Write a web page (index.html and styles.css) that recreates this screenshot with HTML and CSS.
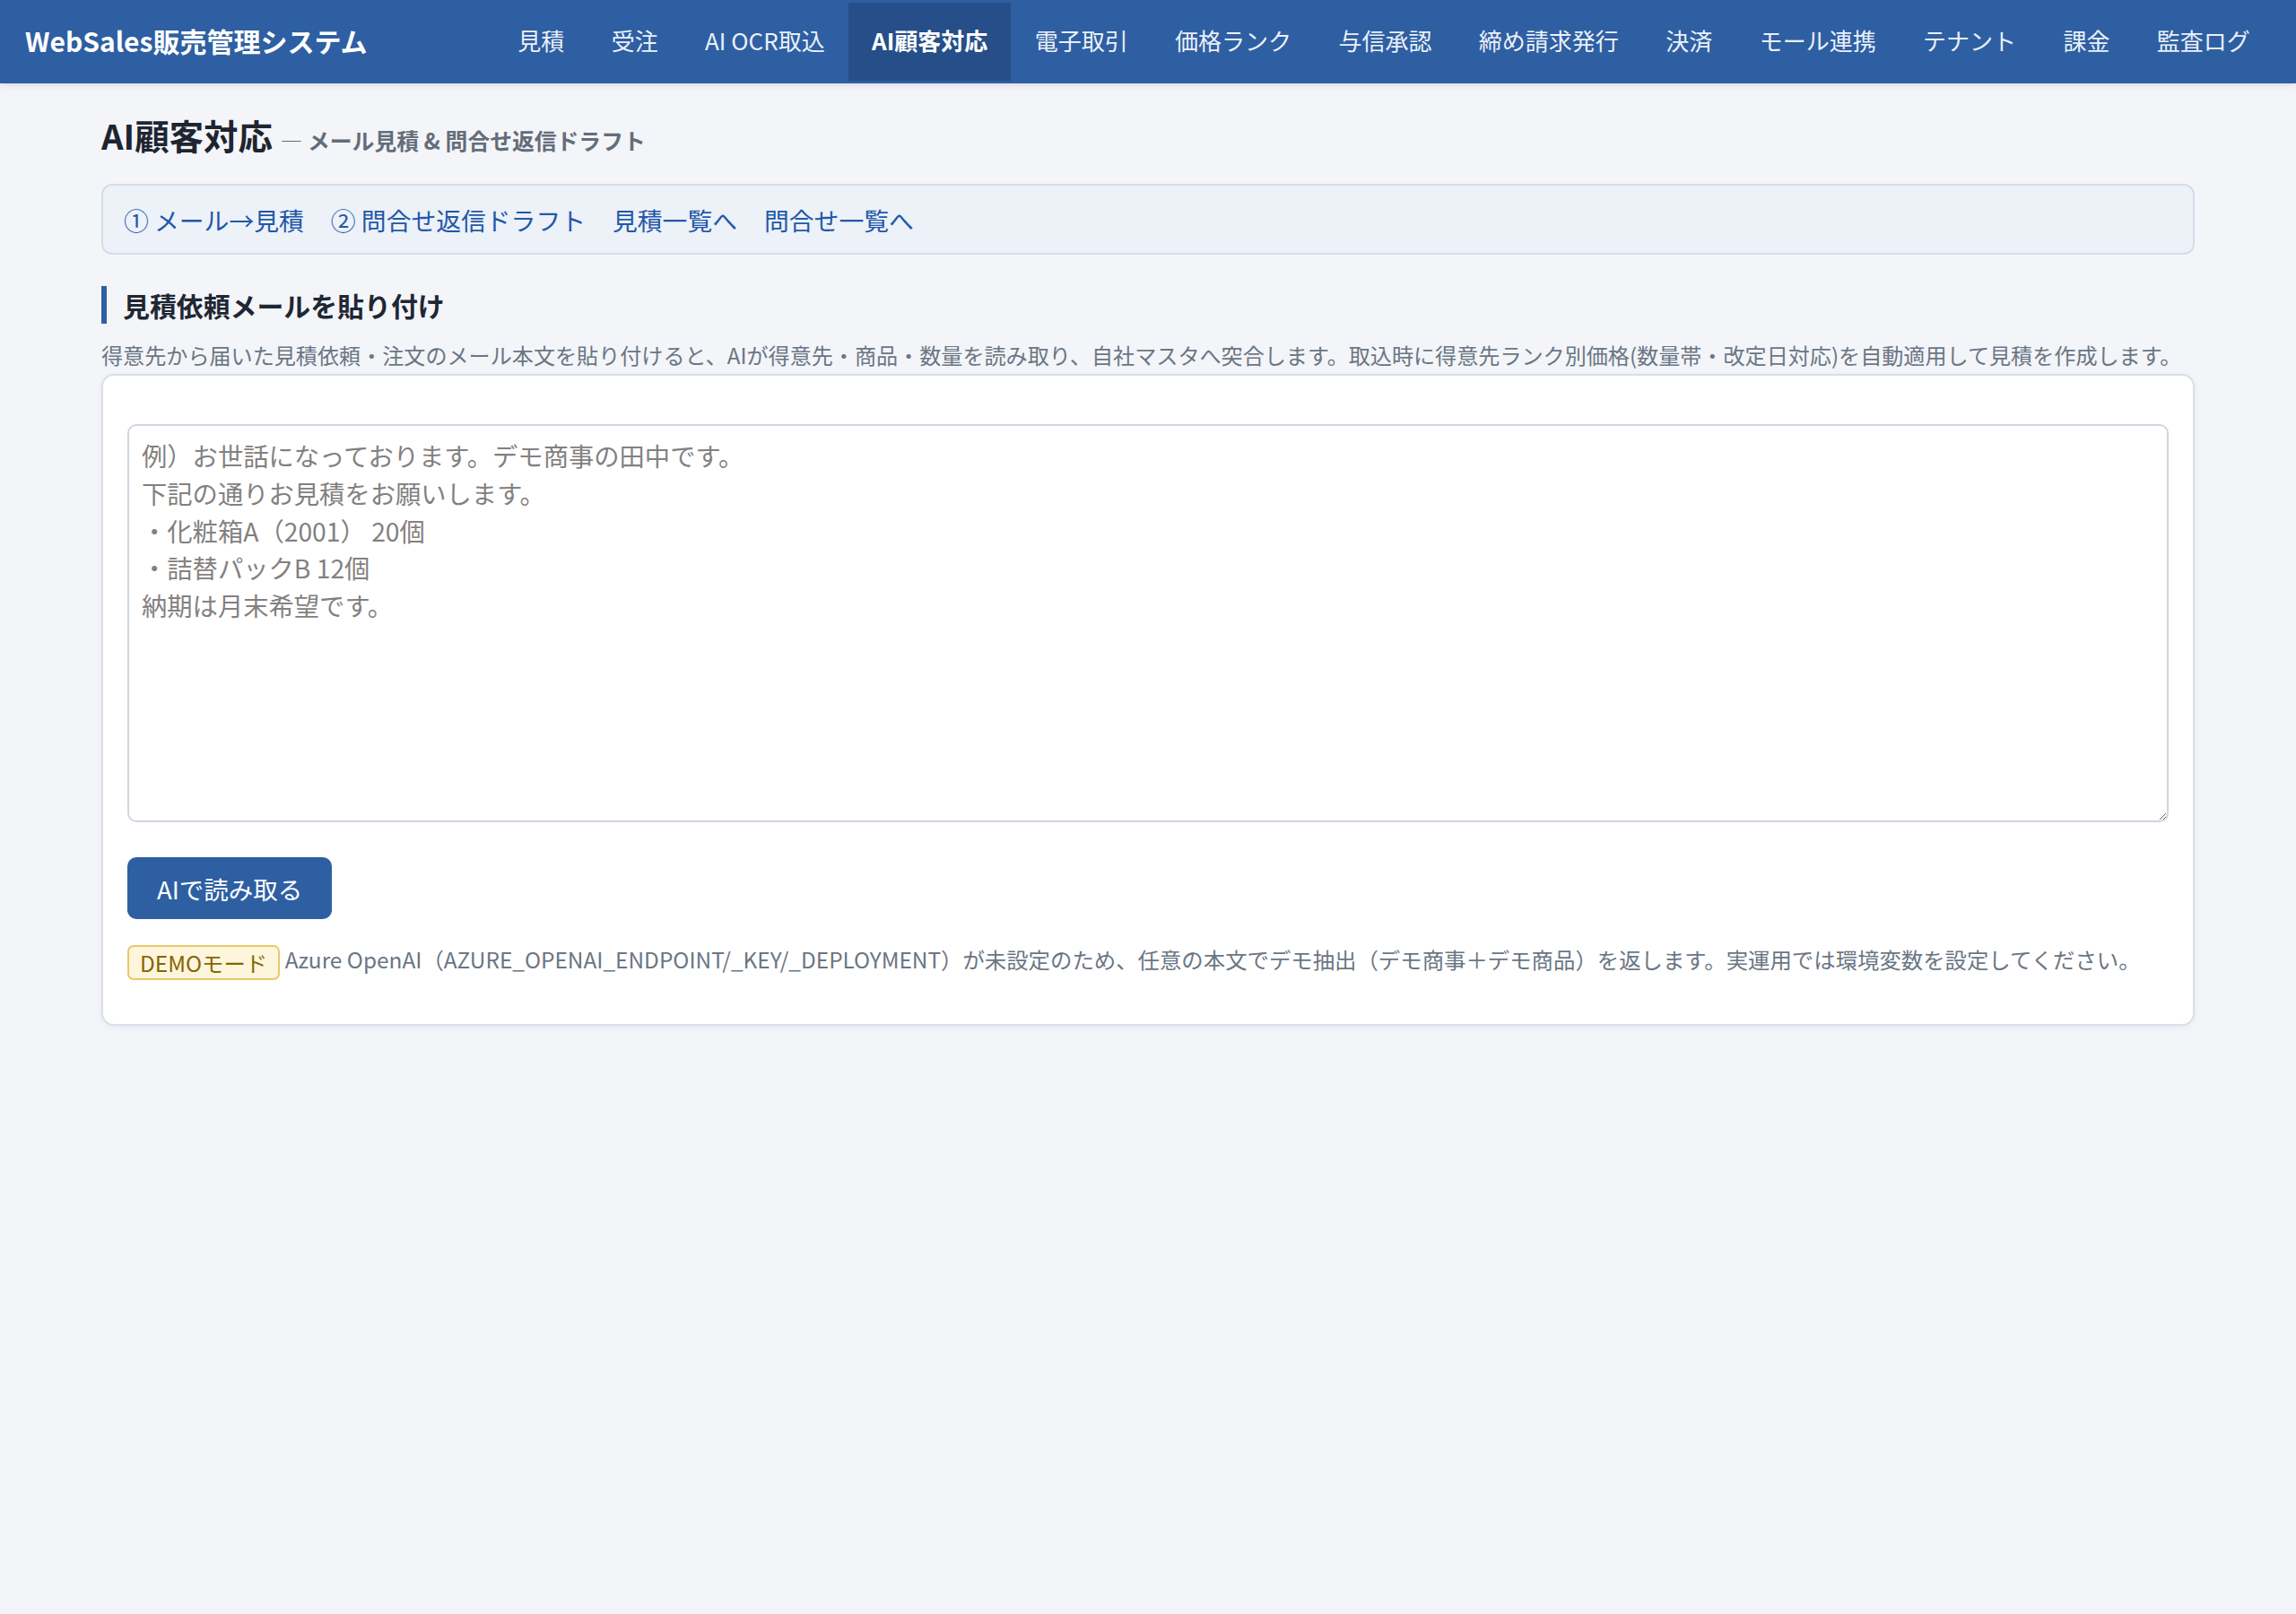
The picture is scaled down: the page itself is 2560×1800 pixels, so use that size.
FILE: index.html
```html
<!DOCTYPE html>
<html lang="ja">
<head>
    <meta charset="utf-8">
    <title>AI顧客対応 - WebSales販売管理システム</title>
    <link rel="stylesheet" href="styles.css">
</head>
<body>
    <header class="topbar">
        <div class="brand">WebSales販売管理システム</div>
        <nav class="mainnav">
            <a href="#">見積</a>
            <a href="#">受注</a>
            <a href="#">AI OCR取込</a>
            <a href="#" class="active">AI顧客対応</a>
            <a href="#">電子取引</a>
            <a href="#">価格ランク</a>
            <a href="#">与信承認</a>
            <a href="#">締め請求発行</a>
            <a href="#">決済</a>
            <a href="#">モール連携</a>
            <a href="#">テナント</a>
            <a href="#">課金</a>
            <a href="#">監査ログ</a>
        </nav>
    </header>

    <main class="page">
        <h1 class="page-title">AI顧客対応 <span class="sub">— メール見積 &amp; 問合せ返信ドラフト</span></h1>

        <div class="tabs">
            <a href="#">① メール→見積</a>
            <a href="#">② 問合せ返信ドラフト</a>
            <a href="#">見積一覧へ</a>
            <a href="#">問合せ一覧へ</a>
        </div>

        <h2 class="section-title">見積依頼メールを貼り付け</h2>
        <p class="desc">得意先から届いた見積依頼・注文のメール本文を貼り付けると、AIが得意先・商品・数量を読み取り、自社マスタへ突合します。取込時に得意先ランク別価格(数量帯・改定日対応)を自動適用して見積を作成します。</p>

        <div class="card">
            <textarea class="mail-input" placeholder="例）お世話になっております。デモ商事の田中です。
下記の通りお見積をお願いします。
・化粧箱A（2001） 20個
・詰替パックB 12個
納期は月末希望です。"></textarea>
            <button class="btn-primary">AIで読み取る</button>
            <p class="note"><span class="badge">DEMOモード</span> Azure OpenAI（AZURE_OPENAI_ENDPOINT/_KEY/_DEPLOYMENT）が未設定のため、任意の本文でデモ抽出（デモ商事＋デモ商品）を返します。実運用では環境変数を設定してください。</p>
        </div>
    </main>
</body>
</html>
```

FILE: styles.css
```css
/* base */
body {
    margin: 0;
    background-color: #f3f5f9;
    font-family: "Noto Sans CJK JP", "Noto Sans", sans-serif;
    color: #1f2733;
}

/* top bar */
.topbar {
    display: flex;
    align-items: stretch;
    height: 93px;
    box-sizing: border-box;
    padding: 3px 25px 3px 26px;
    background-color: #2e5fa2;
    box-shadow: 0 2px 6px rgba(30, 45, 80, 0.12);
}
.brand {
    display: flex;
    align-items: center;
    padding: 0 0 4px 2px;
    color: #ffffff;
    font-size: 30px;
    font-weight: 700;
}
.mainnav {
    display: flex;
    margin-left: auto;
}
.mainnav a {
    display: flex;
    align-items: center;
    padding: 0 26.2px 4px;
    color: #eaf0f8;
    font-size: 26px;
    text-decoration: none;
}
.mainnav a.active {
    background-color: #264e88;
    color: #ffffff;
    font-weight: 700;
}

/* page */
.page {
    padding: 32px 113px 60px;
}
.page-title {
    margin: 0 0 24px;
    font-size: 38.4px;
    line-height: 50px;
    font-weight: 700;
    color: #1e2530;
}
.page-title .sub {
    font-size: 24.8px;
    color: #646d7a;
    font-weight: 700;
}

.tabs {
    display: flex;
    gap: 30px;
    padding: 17.5px 23px;
    background-color: #edf1f8;
    border: 2px solid #d6dde8;
    border-radius: 12px;
    margin-bottom: 35px;
}
.tabs a {
    color: #2258a8;
    font-size: 27.8px;
    line-height: 40px;
    text-decoration: none;
}

.section-title {
    margin: 0;
    padding-left: 18px;
    border-left: 6px solid #2e5fa2;
    font-size: 29.9px;
    line-height: 42px;
    font-weight: 700;
    color: #1f2733;
}
.desc {
    margin: 17px 0 3px;
    font-size: 24.1px;
    line-height: 36px;
    color: #6b7684;
    white-space: nowrap;
}

/* card */
.card {
    background-color: #ffffff;
    border: 2px solid #d9dfe8;
    border-radius: 14px;
    padding: 54px 27px 49px;
    box-shadow: 0 2px 6px rgba(30, 45, 80, 0.06);
}
.mail-input {
    display: block;
    width: 100%;
    height: 444px;
    box-sizing: border-box;
    margin: 0 0 39px;
    padding: 12px 14px;
    border: 2px solid #cfd6e1;
    border-radius: 10px;
    font-family: inherit;
    font-size: 28.3px;
    line-height: 41.8px;
    color: #1f2733;
}
.mail-input::placeholder {
    color: #838180;
}
.btn-primary {
    display: block;
    height: 69px;
    padding: 0 33px;
    border: none;
    border-radius: 10px;
    background-color: #2e5fa2;
    color: #ffffff;
    font-family: inherit;
    font-size: 27.5px;
    cursor: pointer;
}
.note {
    margin: 25px 0 0;
    font-size: 24.4px;
    line-height: 39px;
    color: #6b7684;
    white-space: nowrap;
}
.badge {
    display: inline-block;
    padding: 3px 12px;
    line-height: 29px;
    background-color: #fdf5dc;
    border: 2px solid #e8c96a;
    border-radius: 7px;
    color: #866500;
    vertical-align: middle;
}
```
